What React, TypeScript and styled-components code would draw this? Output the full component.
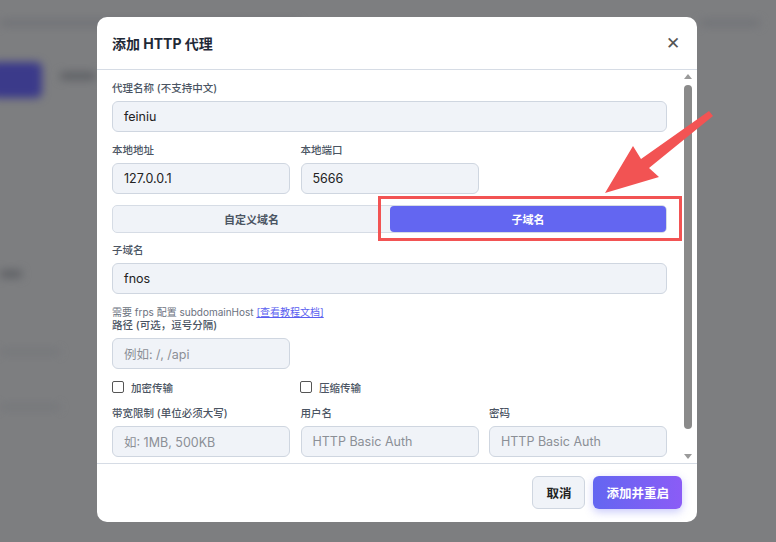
import React from "react";
import styled, { createGlobalStyle } from "styled-components";

const G = createGlobalStyle`
  html,body{margin:0;padding:0;background:#7b7c7e;}
  body{font-family:Inter,"Noto Sans CJK SC",sans-serif;}
  *{box-sizing:border-box;}
`;
const Page = styled.div`position:relative;width:776px;height:542px;overflow:hidden;background:#7d7e80;`;
const Blur = styled.div<{x:number;y:number;w:number;h:number;c:string}>`
  position:absolute;left:${p=>p.x}px;top:${p=>p.y}px;width:${p=>p.w}px;height:${p=>p.h}px;
  background:${p=>p.c};filter:blur(4px);border-radius:6px;`;
const Modal = styled.div`
  position:absolute;left:97px;top:17px;width:600px;height:505px;background:#fff;border-radius:10px;
  display:flex;flex-direction:column;overflow:hidden;`;
const Header = styled.div`
  height:53px;border-bottom:1px solid #d6dce5;display:flex;align-items:center;justify-content:space-between;
  padding:0 17px 0 15px;font-size:14px;font-weight:700;color:#1f2937;`;
const Close = styled.span`font-size:17px;color:#555;font-weight:400;`;
const BodyWrap = styled.div`flex:1;display:flex;position:relative;border-bottom:1px solid #d6dce5;`;
const Body = styled.div`flex:1;padding:12px 30px 0 15px;display:flex;flex-direction:column;`;
const Scroll = styled.div`position:absolute;right:4px;top:4px;bottom:4px;width:10px;display:flex;flex-direction:column;align-items:center;`;
const Thumb = styled.div`width:8px;flex:1;margin:6px 0;background:#8a8a8a;border-radius:4px;max-height:344px;`;
const Tri = styled.div<{up?:boolean}>`width:0;height:0;border-left:4px solid transparent;border-right:4px solid transparent;
  ${p=>p.up?"border-bottom:5px solid #9a9a9a;":"border-top:5px solid #9a9a9a;margin-top:auto;"}`;
const Label = styled.div`font-size:10.5px;color:#4b5563;font-weight:500;height:14px;line-height:14px;margin-bottom:5px;`;
const Input = styled.div<{ph?:boolean}>`height:31px;border:1px solid #cfd6e0;background:#f0f3f8;border-radius:6px;
  padding:0 11px;display:flex;align-items:center;font-size:12.5px;color:${p=>p.ph?"#8b8f96":"#222"};`;
const Grid = styled.div<{mt?:number}>`display:grid;grid-template-columns:178px 178px 178px;column-gap:10.5px;margin-top:${p=>p.mt??0}px;`;
const Tabs = styled.div`margin-top:11px;height:28px;display:grid;grid-template-columns:277px 1fr;background:#f0f3f8;border:1px solid #d6dce5;border-radius:5px;`;
const Tab = styled.div<{on?:boolean}>`display:flex;align-items:center;justify-content:center;font-size:11px;font-weight:600;
  color:${p=>p.on?"#fff":"#4b5563"};background:${p=>p.on?"#6366f1":"transparent"};border-radius:${p=>p.on?"4px":"0"};`;
const Help = styled.div`font-size:10px;color:#6b7280;margin-top:12px;line-height:13px;`;
const Link = styled.span`color:#5b5ff0;text-decoration:underline;`;
const Checks = styled.div`display:grid;grid-template-columns:188px 188px;margin-top:10px;height:16px;`;
const Check = styled.label`display:flex;align-items:center;gap:7px;font-size:10.5px;color:#4b5563;font-weight:500;`;
const Box = styled.span`width:12px;height:12px;border:1.2px solid #555;border-radius:2px;background:#fff;`;
const Footer = styled.div`height:58px;display:flex;justify-content:flex-end;align-items:center;gap:8px;padding:0 15px 2px;`;
const Btn = styled.div<{primary?:boolean}>`height:33px;border-radius:6px;display:flex;align-items:center;justify-content:center;
  font-size:12.5px;font-weight:700;padding:0 13px;
  ${p=>p.primary?"background:linear-gradient(90deg,#6366f1,#8b5cf6);color:#fff;box-shadow:0 3px 8px rgba(99,102,241,.35);":"background:#f0f3f8;border:1px solid #cfd6e0;color:#222;"}`;
const Highlight = styled.div`position:absolute;left:378px;top:196px;width:304px;height:45px;border:3px solid #f25353;`;
const Arrow = styled.svg`position:absolute;left:0;top:0;`;

export default function App(){
  return <Page><G/>
    <Blur x={0} y={20} w={300} h={6} c="#6f7175"/>
    <Blur x={-10} y={62} w={52} h={36} c="#3b3a8a"/>
    <Blur x={60} y={72} w={36} h={8} c="#5f6165"/>
    <Blur x={0} y={270} w={22} h={8} c="#5f6165"/>
    <Blur x={0} y={350} w={60} h={4} c="#727478"/>
    <Blur x={0} y={405} w={60} h={4} c="#727478"/>
    <Blur x={700} y={20} w={60} h={6} c="#707276"/>
    <Modal>
      <Header>添加 HTTP 代理<Close>✕</Close></Header>
      <BodyWrap>
        <Body>
          <Label>代理名称 (不支持中文)</Label>
          <Input>feiniu</Input>
          <Grid mt={12}>
            <div><Label>本地地址</Label><Input>127.0.0.1</Input></div>
            <div><Label>本地端口</Label><Input>5666</Input></div>
          </Grid>
          <Tabs><Tab>自定义域名</Tab><Tab on>子域名</Tab></Tabs>
          <div style={{marginTop:11}}><Label>子域名</Label></div>
          <Input>fnos</Input>
          <Help>需要 frps 配置 subdomainHost <Link>[查看教程文档]</Link></Help>
          <Label>路径 (可选，逗号分隔)</Label>
          <Grid><Input ph>例如: /, /api</Input></Grid>
          <Checks><Check><Box/>加密传输</Check><Check><Box/>压缩传输</Check></Checks>
          <Grid mt={12}>
            <div><Label>带宽限制 (单位必须大写)</Label><Input ph>如: 1MB, 500KB</Input></div>
            <div><Label>用户名</Label><Input ph>HTTP Basic Auth</Input></div>
            <div><Label>密码</Label><Input ph>HTTP Basic Auth</Input></div>
          </Grid>
        </Body>
        <Scroll><Tri up/><Thumb/><Tri/></Scroll>
      </BodyWrap>
      <Footer><Btn>取消</Btn><Btn primary>添加并重启</Btn></Footer>
    </Modal>
    <Highlight/>
    <Arrow width={776} height={542}>
      <polygon points="605,193 633,146 641,159 709,111 713,116 649,168 659,177" fill="#f25353"/>
    </Arrow>
  </Page>;
}
